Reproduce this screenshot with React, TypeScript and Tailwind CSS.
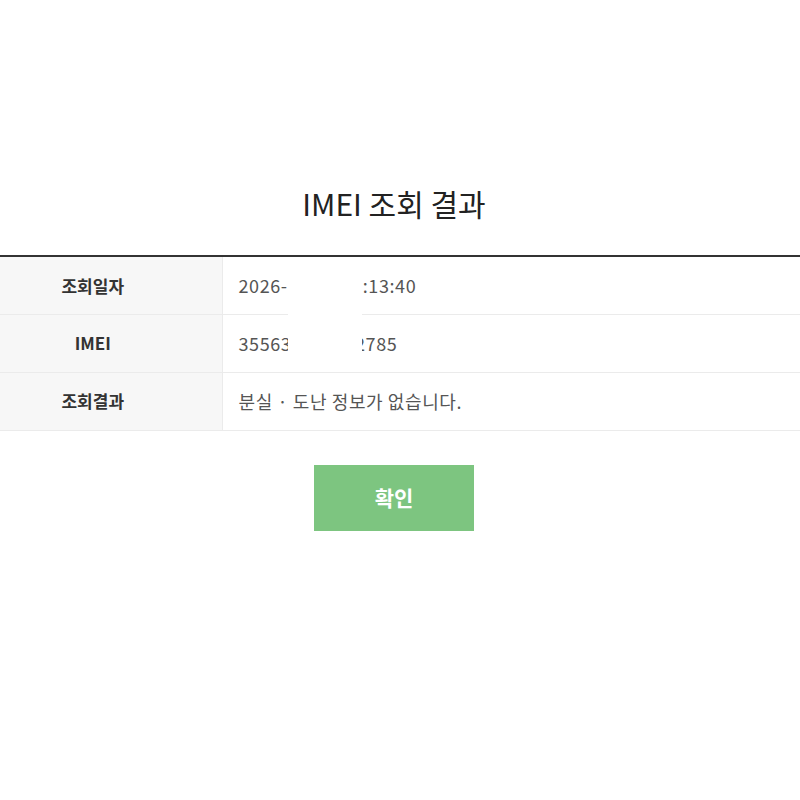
const ROWS = [
  { label: "조회일자", value: "2026-01-15 11:13:40" },
  { label: "IMEI", value: "355631204182785" },
  { label: "조회결과", value: "분실 · 도난 정보가 없습니다." },
];

export default function App() {
  return (
    <div
      className="relative min-h-[800px] bg-white pt-[182px]"
      style={{ fontFamily: '"Noto Sans CJK KR", "Noto Sans", sans-serif' }}
    >
      <h1 className="pr-3 text-center text-[30px] leading-[42px] font-normal text-[#222]">
        IMEI 조회 결과
      </h1>

      <table className="mt-[31px] w-full border-collapse border-t-2 border-[#333]">
        <tbody>
          {ROWS.map((row) => (
            <tr key={row.label} className="border-b border-[#ebebeb]">
              <th className="h-[58px] w-[222px] border-r border-[#ebebeb] bg-[#f7f7f7] pr-[36px] text-center text-[17px] font-bold text-[#333]">
                {row.label}
              </th>
              <td className="h-[58px] pl-4 text-left text-[18px] tracking-[0.6px] text-[#555]">
                {row.value}
              </td>
            </tr>
          ))}
        </tbody>
      </table>

      <div className="flex justify-center pr-3 pt-[34px]">
        <button
          type="button"
          className="h-[66px] w-[160px] bg-[#7dc580] text-[21px] font-bold text-white"
        >
          확인
        </button>
      </div>

      {/* masked area over the date and IMEI values */}
      <div className="absolute top-[262px] left-[288px] h-[105px] w-[74px] bg-white" />
    </div>
  );
}
